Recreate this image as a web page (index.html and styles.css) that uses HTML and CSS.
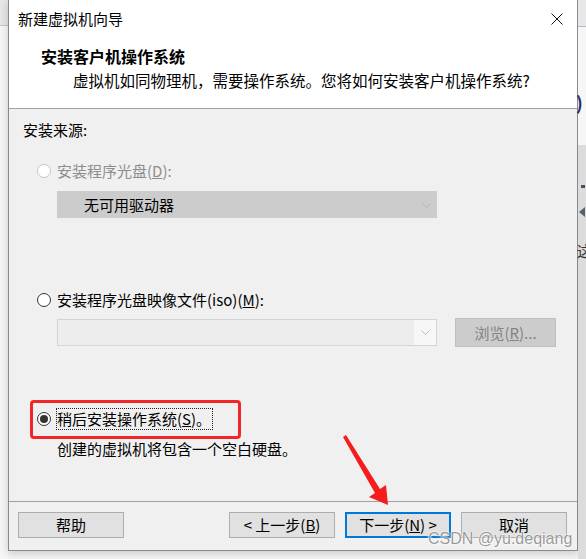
FILE: index.html
```html
<!DOCTYPE html>
<html lang="zh-CN">
<head>
    <meta charset="UTF-8">
    <meta name="viewport" content="width=device-width, initial-scale=1.0">
    <title>新建虚拟机向导</title>
    <link rel="stylesheet" href="styles.css">
</head>
<body>
    <div class="screen">
        <div class="side-left"></div>

        <div class="dialog">
            <div class="titlebar">
                <span>新建虚拟机向导</span>
                <svg class="close" width="12" height="12" viewBox="0 0 12 12">
                    <path d="M0.5 0.5 L11.5 11.5 M11.5 0.5 L0.5 11.5" stroke="#111" stroke-width="1" fill="none"/>
                </svg>
            </div>

            <div class="header">
                <div class="header-title">安装客户机操作系统</div>
                <div class="header-sub">虚拟机如同物理机，需要操作系统。您将如何安装客户机操作系统?</div>
            </div>

            <div class="content">
                <div class="label">安装来源:</div>

                <div class="option option-first disabled">
                    <span class="radio"></span>
                    <span>安装程序光盘(<u>D</u>):</span>
                </div>
                <div class="select select-disabled">
                    <span>无可用驱动器</span>
                    <svg class="chevron" width="9" height="5" viewBox="0 0 9 5">
                        <polyline points="0.5,0.5 4.5,4.5 8.5,0.5" stroke="#b4b4b4" fill="none"/>
                    </svg>
                </div>

                <div class="option option-iso">
                    <span class="radio"></span>
                    <span>安装程序光盘映像文件(iso)(<u>M</u>):</span>
                </div>
                <div class="iso-row">
                    <div class="select select-empty">
                        <span class="select-drop">
                            <svg width="9" height="5" viewBox="0 0 9 5">
                                <polyline points="0.5,0.5 4.5,4.5 8.5,0.5" stroke="#bcbcbc" fill="none"/>
                            </svg>
                        </span>
                    </div>
                    <div class="browse">浏览(<u>R</u>)...</div>
                </div>

                <div class="option option-later">
                    <span class="radio checked"></span>
                    <span class="focus">稍后安装操作系统(<u>S</u>)。</span>
                </div>
                <div class="desc">创建的虚拟机将包含一个空白硬盘。</div>
            </div>

            <div class="footer">
                <button class="btn">帮助</button>
                <div class="footer-right">
                    <button class="btn">&lt; 上一步(<u>B</u>)</button>
                    <button class="btn btn-default">下一步(<u>N</u>) &gt;</button>
                    <button class="btn">取消</button>
                </div>
            </div>
        </div>

        <div class="side-right">
            <div class="side-top"></div>
            <div class="side-mid"><span class="side-glyph">)</span></div>
            <div class="side-low">
                <span class="side-dot"></span>
                <span class="side-tri"></span>
                <span class="side-char">这</span>
            </div>
        </div>

        <!-- annotations drawn over the screenshot -->
        <div class="mark-box"></div>
        <svg class="mark-arrow" width="60" height="80" viewBox="0 0 60 80">
            <polygon points="1,3 4,1 38,55 44,51 46,71 27,63 33,59" fill="#f41c1c"/>
        </svg>
        <div class="watermark">CSDN @yu.deqiang</div>
    </div>
</body>
</html>
```

FILE: styles.css
```css
body {
    margin: 0;
    background-color: #f3f3f3;
    font-family: "Noto Sans CJK SC", "Liberation Sans", sans-serif;
    font-size: 15px;
    color: #000;
}
.screen {
    position: relative;
    display: flex;
    width: 586px;
    height: 559px;
    overflow: hidden;
}
.side-left {
    width: 8px;
    height: 100%;
    background: linear-gradient(#e6e6e6 0, #e6e6e6 25px, #c8c8c8 25px, #c8c8c8 26px, #f6f6f6 26px);
}
.dialog {
    width: 570px;
    height: 551px;
    box-sizing: border-box;
    border: 1px solid #8a8a8a;
    border-top: none;
    background: white;
    box-shadow: 0 2px 8px rgba(0, 0, 0, 0.18);
    display: flex;
    flex-direction: column;
}
.titlebar {
    height: 38px;
    display: flex;
    align-items: center;
    justify-content: space-between;
    padding: 0 14px 0 9px;
    line-height: 20px;
}
.header {
    height: 71px;
    padding: 7px 0 0 32px;
    box-sizing: border-box;
    border-bottom: 1px solid #a0a0a0;
}
.header-title {
    font-weight: bold;
    font-size: 16px;
    line-height: 22px;
}
.header-sub {
    padding-left: 32px;
    margin-top: 2px;
    line-height: 22px;
    font-size: 15.5px;
}
.content {
    height: 392px;
    box-sizing: border-box;
    background-color: #f0f0f0;
    padding: 11px 0 0 14px;
    line-height: 20px;
}
.option {
    display: flex;
    align-items: center;
    gap: 6px;
    height: 20px;
    margin-left: 14px;
}
.option-first {
    margin-top: 21px;
}
.option-iso {
    margin-top: 72px;
}
.option-later {
    margin-top: 62px;
}
.disabled {
    color: #8d8d8d;
}
.radio {
    width: 14px;
    height: 14px;
    box-sizing: border-box;
    border: 1px solid #333;
    border-radius: 50%;
    background: white;
    position: relative;
}
.disabled .radio {
    border-color: #c4c4c4;
}
.radio.checked::after {
    content: "";
    position: absolute;
    left: 2px;
    top: 2px;
    width: 8px;
    height: 8px;
    border-radius: 50%;
    background: #333;
}
.focus {
    outline: 1px dotted #222;
    outline-offset: 0;
    padding-right: 1px;
}
.select {
    width: 380px;
    height: 27px;
    box-sizing: border-box;
    margin-left: 34px;
    display: flex;
    align-items: center;
    justify-content: space-between;
}
.select-disabled {
    margin-top: 10px;
    background: #cccccc;
    padding: 0 6px 0 27px;
}
.chevron {
    margin-top: 1px;
}
.iso-row {
    display: flex;
    align-items: center;
    height: 29px;
    margin-top: 8px;
}
.select-empty {
    height: 27px;
    border: 1px solid #d4d4d4;
    background: #ededed;
    justify-content: flex-end;
}
.select-drop {
    width: 22px;
    height: 25px;
    background: #f7f7f7;
    display: flex;
    align-items: center;
    justify-content: center;
}
.browse {
    width: 101px;
    height: 29px;
    box-sizing: border-box;
    margin-left: 18px;
    border: 1px solid #bfbfbf;
    background: #cccccc;
    color: #848484;
    display: flex;
    align-items: center;
    justify-content: center;
}
.desc {
    margin: 10px 0 0 34px;
}
.footer {
    flex: 1;
    border-top: 1px solid #a0a0a0;
    background-color: #f0f0f0;
    display: flex;
    align-items: flex-start;
    padding: 10px 10px 0 9px;
}
.footer-right {
    margin-left: auto;
    display: flex;
    gap: 10px;
}
.btn {
    width: 106px;
    height: 26px;
    box-sizing: border-box;
    border: 1px solid #adadad;
    background: #e1e1e1;
    font-family: "Noto Sans CJK SC", "Liberation Sans", sans-serif;
    font-size: 15px;
    color: #000;
    padding: 0;
    line-height: 20px;
}
.btn-default {
    border: 2px solid #0078d7;
}
.side-right {
    width: 8px;
    height: 100%;
    display: flex;
    flex-direction: column;
}
.side-top {
    height: 26px;
    background: #e8e8e8;
    border-bottom: 1px solid #a9bcd0;
}
.side-mid {
    height: 118px;
    background: #f6f6f6;
    position: relative;
}
.side-glyph {
    position: absolute;
    left: -2px;
    top: 62px;
    color: #1c2f6c;
    font-weight: bold;
    font-size: 18px;
}
.side-low {
    flex: 1;
    background: #dcdcdc;
    position: relative;
}
.side-dot {
    position: absolute;
    left: 3px;
    top: 40px;
    width: 4px;
    height: 3px;
    background: #45515e;
}
.side-tri {
    position: absolute;
    left: 1px;
    top: 62px;
    border-right: 6px solid #55606b;
    border-top: 5px solid transparent;
    border-bottom: 5px solid transparent;
}
.side-char {
    position: absolute;
    left: -1px;
    top: 95px;
    font-size: 15px;
    color: #333;
}
.mark-box {
    position: absolute;
    left: 30px;
    top: 400px;
    width: 211px;
    height: 39px;
    box-sizing: border-box;
    border: 3px solid #f12626;
    border-radius: 4px;
}
.mark-arrow {
    position: absolute;
    left: 342px;
    top: 434px;
}
.watermark {
    position: absolute;
    left: 428px;
    top: 530px;
    font-family: "Liberation Sans", sans-serif;
    font-size: 16px;
    color: rgba(120, 120, 120, 0.75);
    text-shadow: 0 0 2px #fff, 0 0 2px #fff;
}
```
